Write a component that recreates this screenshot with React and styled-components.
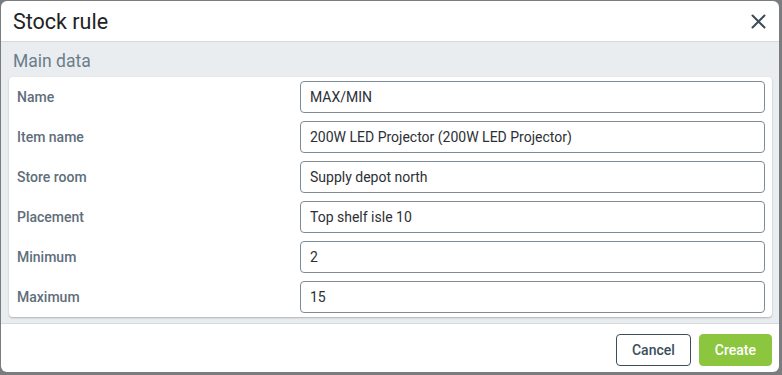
import React from "react";
import styled, { createGlobalStyle } from "styled-components";

const GlobalStyle = createGlobalStyle`
  html, body {
    margin: 0;
    padding: 0;
    background: #7a7c7e;
    font-family: Roboto, "Liberation Sans", Arial, sans-serif;
  }
  * { box-sizing: border-box; }
`;

const Backdrop = styled.div`
  width: 782px;
  height: 375px;
  padding: 1px 3px 3px 1px;
  background: #7a7c7e;
`;

const Modal = styled.div`
  width: 778px;
  height: 371px;
  background: #ffffff;
  border-radius: 6px;
  display: flex;
  flex-direction: column;
  overflow: hidden;
`;

const Header = styled.div`
  height: 41px;
  display: flex;
  align-items: center;
  justify-content: space-between;
  padding: 0 10px 0 12px;
  border-bottom: 1px solid #d5dadd;
  flex-shrink: 0;
`;

const Title = styled.h1`
  margin: 0;
  font-size: 21.5px;
  font-weight: 400;
  color: #1f2326;
`;

const CloseButton = styled.button`
  border: none;
  background: transparent;
  padding: 0;
  width: 22px;
  height: 22px;
  display: flex;
  align-items: center;
  justify-content: center;
  cursor: pointer;
`;

const Body = styled.div`
  background: #e9edef;
  padding: 7px 7px 5px 8px;
  flex: 1;
`;

const SectionTitle = styled.div`
  font-size: 17.5px;
  line-height: 24px;
  color: #6a7d8b;
  padding-left: 4px;
  margin-bottom: 4px;
`;

const Card = styled.div`
  background: #ffffff;
  border-radius: 4px;
  box-shadow: 0 1px 2px rgba(0, 0, 0, 0.25);
  padding: 0 7px 0 8px;
`;

const Row = styled.div`
  display: grid;
  grid-template-columns: 283px 1fr;
  align-items: center;
  height: 40px;
`;

const Label = styled.label`
  font-size: 14px;
  font-weight: 500;
  color: #5e6e7b;
`;

const Input = styled.input`
  height: 32px;
  width: 100%;
  border: 1px solid #7f8c96;
  border-radius: 4px;
  padding: 0 9px;
  font-family: inherit;
  font-size: 14px;
  color: #2c3034;
  background: #fff;
  outline: none;
`;

const Footer = styled.div`
  height: 49px;
  border-top: 1px solid #d5dadd;
  display: flex;
  justify-content: flex-end;
  align-items: center;
  gap: 8px;
  padding: 4px 7px 0 0;
  flex-shrink: 0;
`;

const Button = styled.button`
  height: 32px;
  padding: 0 15px;
  border-radius: 4px;
  font-family: inherit;
  font-size: 14px;
  font-weight: 500;
  cursor: pointer;
  border: 1px solid ${(p) => (p.$primary ? "#8cc63f" : "#3c4e5c")};
  background: ${(p) => (p.$primary ? "#8cc63f" : "#ffffff")};
  color: ${(p) => (p.$primary ? "#ffffff" : "#3c4e5c")};
`;

const fields = [
  ["Name", "MAX/MIN"],
  ["Item name", "200W LED Projector (200W LED Projector)"],
  ["Store room", "Supply depot north"],
  ["Placement", "Top shelf isle 10"],
  ["Minimum", "2"],
  ["Maximum", "15"],
];

const App = () => {
  return (
    <>
      <GlobalStyle />
      <Backdrop>
        <Modal>
          <Header>
            <Title>Stock rule</Title>
            <CloseButton aria-label="Close">
              <svg width="15" height="15" viewBox="0 0 15 15">
                <path d="M1.5 1.5 L13.5 13.5 M13.5 1.5 L1.5 13.5" stroke="#3a4c5a" strokeWidth="2" strokeLinecap="round" />
              </svg>
            </CloseButton>
          </Header>
          <Body>
            <SectionTitle>Main data</SectionTitle>
            <Card>
              {fields.map(([label, value]) => (
                <Row key={label}>
                  <Label>{label}</Label>
                  <Input defaultValue={value} />
                </Row>
              ))}
            </Card>
          </Body>
          <Footer>
            <Button>Cancel</Button>
            <Button $primary>Create</Button>
          </Footer>
        </Modal>
      </Backdrop>
    </>
  );
};

export default App;
